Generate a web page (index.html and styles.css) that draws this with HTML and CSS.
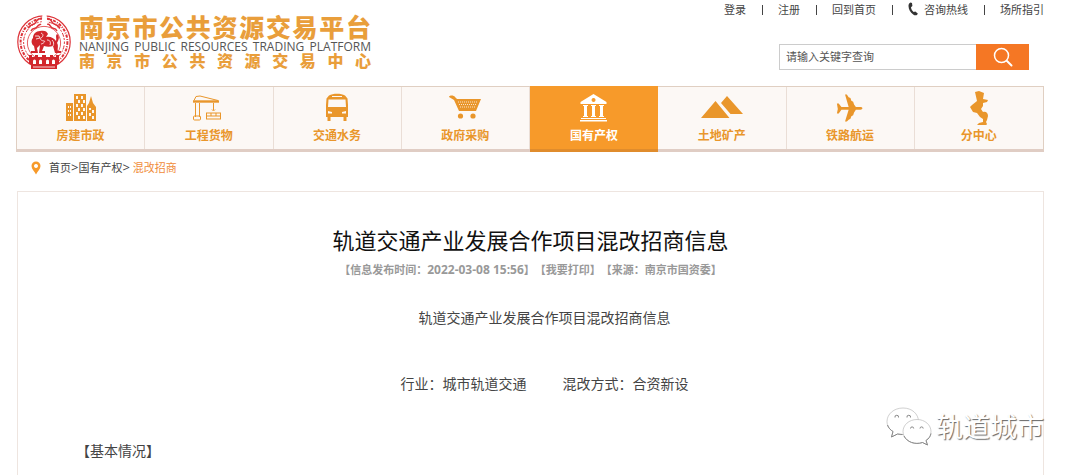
FILE: index.html
```html
<!DOCTYPE html>
<html lang="zh-CN">
<head>
<meta charset="utf-8">
<title>轨道交通产业发展合作项目混改招商信息</title>
<link rel="stylesheet" href="styles.css">
</head>
<body>
<header class="header">
  <a class="brand" href="#">
    <svg class="emblem" viewBox="0 0 56 56" aria-hidden="true">
      <g fill="none" stroke="#dd3339">
        <circle cx="28" cy="28" r="26.2" stroke-width="1.2"/>
        <circle cx="28" cy="28" r="23.4" stroke-width="2" stroke-dasharray="3 1.4 1 1.200"/>
        <circle cx="28" cy="28" r="20.4" stroke-width="1" stroke-dasharray="2 1.6 4 1.200"/>
        <path stroke-width="1.500" d="M12 14c3-5 6-2 8-6s4-3 6-4M15 17c2-4 4-1 6-4s3-2 4-3M44 14c-3-5-6-2-8-6s-4-3-5-4M41 17c-2-4-4-1-6-4s-2-3-4-3"/>
      </g>
      <path fill="#fff" d="M26.500 0h4l1 10h-6z"/>
      <circle cx="28" cy="29" r="16.600" fill="#fff" stroke="#dd3339" stroke-width=".8"/>
      <g fill="#d2262c">
        <path d="M17 24c0-4 3-7 7-7 4-1 7 0 8 3l-2 3c4-1 8 1 10 4 1-3-1-5 1-7 3 2 2 6 0 9 2 3 0 6 1 8h3v2h-6l-2-7c-3 1-6 1-9 0l-2 5h3v2h-6l1-8-3 3 1 5h-7v-2h4l-1-5c-3-2-3-6-1-8z"/>
        <path d="M13 43v-2h3v2h3v-2h3v2h4v-2h4v2h4v-2h3v2h3v-2h3v9h-2v5H15v-5h-2z"/>
      </g>
      <g fill="none" stroke="#fff" stroke-width=".8">
        <path d="M19 22h4l1 2-4 1M25 19c3 1 2 4 0 5s1 3 3 3-1 3-3 3M31 26c3 0 4 2 3 5M36 26c2 2 2 4 1 6M17 53h22"/>
      </g>
      <path fill="#fff" d="M17 50v-3a1.500 1.500 0 0 1 3 0v3zM23 50v-3a1.500 1.500 0 0 1 3 0v3zM30 50v-3a1.500 1.500 0 0 1 3 0v3zM36 50v-3a1.500 1.500 0 0 1 3 0v3z"/>
    </svg>
    <span class="brand-text">
      <span class="brand-main">南京市公共资源交易平台</span>
      <span class="brand-en">NANJING PUBLIC RESOURCES TRADING PLATFORM</span>
      <span class="brand-sub">南京市公共资源交易中心</span>
    </span>
  </a>
  <div class="tools">
    <nav class="quick" aria-label="快捷链接">
      <a href="#">登录</a>
      <a href="#">注册</a>
      <a href="#">回到首页</a>
      <a class="phone" href="#"><svg viewBox="0 0 10 14" width="10" height="14" aria-hidden="true"><path fill="#333" d="M2.600.500 4 .900l.4 3.200L3 5.200c.2 1.900 1.200 3.600 2.700 4.800l1.600-.6 2.500 2-.6 1.300c-1 .9-2.700.7-4-.3C2.300 10.300.6 7.400.5 4 .500 2.200 1.200.800 2.600.500z"/></svg>咨询热线</a>
      <a href="#">场所指引</a>
    </nav>
    <form class="search">
      <input class="search-box" type="text" placeholder="请输入关键字查询" aria-label="请输入关键字查询">
      <button class="search-btn" type="button" aria-label="查询">
        <svg viewBox="0 0 20 20" width="20" height="20" aria-hidden="true"><g fill="none" stroke="#fff" stroke-linecap="round"><circle cx="8.500" cy="8.500" r="7" stroke-width="1.500"/><path stroke-width="2" d="m14 14 4.500 4.500"/></g></svg>
      </button>
    </form>
  </div>
</header>

<nav class="menu" aria-label="主导航">
  <a class="item" href="#">
    <svg viewBox="0 0 32 32" aria-hidden="true"><path fill="#e9962b" fill-rule="evenodd" d="M1 11h7v18H1zM3 14v2h1v-2zM5 14v2h1v-2zM3 18v2h1v-2zM5 18v2h1v-2zM3 22v2h1v-2zM5 22v2h1v-2zM9 2h12v27H9zM11 4v3h2V4zM16 4v3h2V4zM13 8v3h2V8zM18 8v3h2V8zM11 12v3h2v-3zM16 12v3h2v-3zM13 16v3h2v-3zM18 16v3h2v-3zM11 20v3h2v-3zM16 20v3h2v-3zM13 24v3h2v-3zM18 24v3h2v-3zM22 14l2-3 2-7 2 7 3 4v14h-9zM24 16v2h2v-2zM27 18v3h2v-3zM24 21v3h2v-3zM27 24v3h2v-3z"/></svg>
    <span>房建市政</span>
  </a>
  <a class="item" href="#">
    <svg viewBox="0 0 32 32" aria-hidden="true"><g fill="none" stroke="#e9962b"><path stroke-width="2.400" d="M0 9.500H26"/><path d="M1 8.500 3 4.500l4-.5 18 4.500M2.500 11v14M6.500 11v14M20.500 11v7M19 17.500l1.500 1.500 1.500-1.500"/><rect x=".500" y="24" width="7" height="4" rx="1"/><rect x="13.500" y="21" width="14" height="6"/><path d="M13.500 24h14M18 21v3M23 21v3"/></g></svg>
    <span>工程货物</span>
  </a>
  <a class="item" href="#">
    <svg class="narrow" viewBox="2 0 28 32" aria-hidden="true"><path fill="#e9962b" fill-rule="evenodd" d="M8 3.500c4-2.500 12-2.500 16 0l2.500 3L27 13v12h-1.500v4h-3v-4h-13v4h-3v-4H5V13l.5-6.500zM11 4v1h10V4zM7.500 7.500 7 15h18l-.5-7.500zM7 19v2.500h4V20zM25 19v2.500h-4V20z"/></svg>
    <span>交通水务</span>
  </a>
  <a class="item" href="#">
    <svg viewBox="0 0 32 32" aria-hidden="true"><path fill="#e9962b" d="M0 5c0-2 5-2 6 0l2 2h24l-5 12H10L5 8z"/><g fill="none" stroke="#fcf6f1" stroke-width=".8" stroke-dasharray="1 1"><path d="M9 10h20M10 12.500h18M11 15h16"/></g><g fill="#e9962b"><circle cx="11.500" cy="24" r="2.600"/><circle cx="24" cy="24" r="2.600"/></g></svg>
    <span>政府采购</span>
  </a>
  <a class="item active" href="#" aria-current="page">
    <svg viewBox="0 0 32 32" aria-hidden="true"><path fill="#fff" fill-rule="evenodd" d="M15.500 2l13 8v2h-26v-2zM15.500 6a2 2 0 1 0 .1 0zM5 13h5v1H9v10h1v1H5v-1h1V14H5zM13 13h5v1h-1v10h1v1h-5v-1h1V14h-1zM21 13h5v1h-1v10h1v1h-5v-1h1V14h-1zM3 26h25v1H3zM2 28h27v1.500H2z"/></svg>
    <span>国有产权</span>
  </a>
  <a class="item" href="#">
    <svg class="wide" viewBox="0 0 42 32" aria-hidden="true"><path fill="#e9962b" d="M0 26 14.500 9 28.500 26zM20 11l6-7 16 18H29.500z"/></svg>
    <span>土地矿产</span>
  </a>
  <a class="item" href="#">
    <svg class="narrow" viewBox="0 0 31 32" aria-hidden="true"><path fill="#e9962b" d="M1 11h2l3 4h8L10 1h2l2 3 2 1 1 3 2 1 1 3 2 3h5c3 0 3 3 0 3h-5l-2 3-1 3-2 1-1 3-2 1-2 2h-2l4-13H6l-3 4H1l1-5z"/></svg>
    <span>铁路航运</span>
  </a>
  <a class="item" href="#">
    <svg class="tall" viewBox="0 0 20 34" aria-hidden="true"><path fill="#e9962b" d="M6 1l4-1 5 2-1 6 5 1-1 2-4 1v3l-2 3 2 3c3-1 5 1 5 4l-1 4-1 2 1 2-2 3H9l-1-2 2-2 4-1v-3l-3-2-3-4-4-1-3-5 2-2 5-4z"/></svg>
    <span>分中心</span>
  </a>
</nav>

<nav class="crumbs" aria-label="当前位置">
  <svg viewBox="0 0 10 14" width="10" height="14" aria-hidden="true"><path fill="#f79a2a" fill-rule="evenodd" d="M5 .500a4.500 4.500 0 0 1 4.500 4.500C9.500 8 6.500 10.500 5 13.500 3.500 10.500.500 8 .500 5A4.500 4.500 0 0 1 5 .500zM5 3a2 2 0 1 0 .01 0z"/></svg>
  <div><a href="#">首页</a><span class="sep">&gt;</span><a href="#">国有产权</a><span class="sep">&gt;</span> <a class="here" href="#">混改招商</a></div>
</nav>

<main class="article">
  <h1 class="title">轨道交通产业发展合作项目混改招商信息</h1>
  <div class="meta"><span>【信息发布时间：<time>2022-03-08 15:56</time>】</span><a href="#">【我要打印】</a><span>【来源：南京市国资委】</span></div>
  <p class="subtitle">轨道交通产业发展合作项目混改招商信息</p>
  <p class="facts"><span>行业：城市轨道交通</span><span>混改方式：合资新设</span></p>
  <h2 class="section">【基本情况】</h2>
</main>

<div class="watermark">
  <svg viewBox="0 0 46 40" width="46" height="40" aria-hidden="true">
    <g fill="#fff" stroke="#bbb" stroke-width=".7">
      <path d="M1 14.500c0 4.500 2.500 8 6 10L5.500 30l6-3c8 2.500 21-2 21-12.500C32.500 7 26 1 17 1S1 7 1 14.500z"/>
      <path d="M31 12.500c-8 0-14 5.500-14 12s6 12 14 12c2 0 4-.3 5.500-1l5 2.500-1.500-4.500c3-2 5-5.500 5-9 0-6.500-6-12-14-12z"/>
    </g>
    <g fill="none" stroke="#888"><path d="M1.500 18c1 3 3 5 5.500 6.500L5.500 30l6-3 5 .500M18 29c3 6 11 9 18.500 6.500l5 2.500-1.500-4.500c3-2 4.500-4 5-7M9 10.500a1.800 1.800 0 1 1 3.500 0M21 10.500a1.800 1.800 0 1 1 3.500 0M24.500 21.500a1.600 1.600 0 1 1 3.200 0M34 21.500a1.600 1.600 0 1 1 3.200 0"/></g>
  </svg>
  <span>轨道城市</span>
</div>
</body>
</html>
```
FILE: styles.css
```css
* {
  box-sizing: border-box;
}

body {
  position: relative;
  display: flex;
  flex-direction: column;
  min-height: 100vh;
  margin: 0;
  padding: 0 36px 0 16px;
  background: #fff;
  color: #444;
  font: 11px/18px "Open Sans", "Noto Sans CJK SC", sans-serif;
}

a {
  color: inherit;
  text-decoration: none;
}

.header {
  display: flex;
  justify-content: space-between;
  height: 86px;
}

.brand {
  display: flex;
  align-items: flex-start;
  gap: 7px;
  padding-top: 14px;
}

.emblem {
  width: 56px;
  height: 56px;
}

.brand-text {
  display: flex;
  flex-direction: column;
  width: 292px;
  color: #e99e3b;
  font-weight: 900;
  text-align-last: justify;
}

.brand-main {
  font-size: 25px;
  line-height: 26px;
}

.brand-en {
  color: #555;
  font-size: 12px;
  font-weight: 400;
  line-height: 13px;
  white-space: nowrap;
}

.brand-sub {
  font-size: 16px;
  line-height: 16px;
}

.tools {
  display: flex;
  flex-direction: column;
  align-items: flex-end;
  gap: 25px;
}

.quick {
  display: flex;
  line-height: 19px;
}

.quick a + a::before {
  content: "";
  display: inline-block;
  width: 1px;
  height: 10px;
  margin: 0 15px 0 16px;
  background: #444;
  vertical-align: -1px;
}

.phone svg {
  margin-right: 6px;
  vertical-align: -2px;
}

.search {
  display: flex;
  height: 26px;
  margin-right: 15px;
}

.search-box {
  width: 197px;
  padding: 0 6px;
  border: 1px solid #ccc;
  border-right: 0;
  color: #555;
  font: inherit;
  outline: 0;
}

.search-box::placeholder {
  color: #555;
  opacity: 1;
}

.search-btn {
  display: flex;
  align-items: center;
  justify-content: center;
  width: 53px;
  padding: 0;
  border: 0;
  background: #f57724;
}

.menu {
  display: grid;
  grid-template-columns: repeat(8, 1fr);
  height: 66px;
  border: 1px solid #e0cfc2;
  border-bottom: 3px solid #e0cdc4;
  background: #fcf8f5;
}

.item {
  display: flex;
  flex-direction: column;
  align-items: center;
  gap: 2px;
  padding-top: 4px;
  border-right: 1px solid #eaded6;
  color: #e9962b;
  font-size: 12px;
  font-weight: 700;
  line-height: 18px;
}

.item:last-child {
  border-right: 0;
}

.item svg {
  width: 32px;
  height: 34px;
}

.item .narrow {
  width: 28px;
}

.item .wide {
  width: 42px;
}

.item .tall {
  width: 20px;
}

.item.active {
  margin: -1px 0 -3px;
  padding-top: 5px;
  border-right: 0;
  border-bottom: 3px solid #e08c2c;
  background: #f79a2a;
  color: #fff;
}

.crumbs {
  display: flex;
  align-items: center;
  gap: 8px;
  height: 31px;
  padding-left: 15px;
}

.sep {
  font-size: 13px;
}

.here {
  color: #f08c3a;
}

.article {
  flex: 1;
  margin: 8px 0 0 1px;
  padding: 32px 30px 0;
  border: 1px solid #eee5e0;
  border-bottom: 0;
  font-size: 14px;
  line-height: 22px;
}

.title {
  margin: 0;
  color: #111;
  font-size: 22px;
  font-weight: 400;
  line-height: 32px;
  text-align: center;
}

.meta {
  margin: 4px 0 27px;
  color: #999;
  font-size: 11px;
  font-weight: 700;
  line-height: 20px;
  text-align: center;
  text-spacing-trim: space-all;
}

.meta time {
  font-size: 12px;
}

.subtitle {
  margin: 0 0 44px;
  text-align: center;
  text-indent: 2em;
}

.facts {
  display: flex;
  justify-content: center;
  gap: 36px;
  margin: 0 0 45px;
  padding-left: 28px;
}

.section {
  margin: 0;
  font-size: 14px;
  font-weight: 400;
  text-indent: 2em;
  text-spacing-trim: space-all;
}

.watermark {
  position: absolute;
  right: 36px;
  bottom: 28px;
  display: flex;
  align-items: center;
  gap: 4px;
  color: #fff;
  font-size: 27px;
  line-height: 40px;
  text-shadow: 1px 1px 1px #666;
}
```
